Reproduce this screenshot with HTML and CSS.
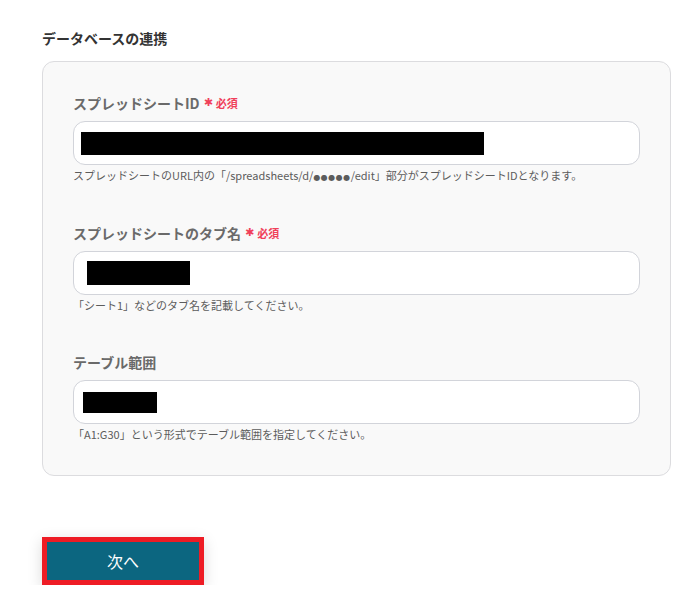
FILE: index.html
```html
<!DOCTYPE html>
<html lang="ja">
<head>
  <meta charset="UTF-8">
  <meta name="viewport" content="width=device-width, initial-scale=1.0">
  <title>データベースの連携</title>
  <link rel="stylesheet" href="styles.css">
</head>
<body>
  <div class="page">
    <h3 class="section-title">データベースの連携</h3>
    <div class="card">

      <div class="field">
        <div class="field-label">スプレッドシートID<span class="required"><span class="star">✱</span>必須</span></div>
        <div class="input-box">
          <div class="mask mask-id"></div>
        </div>
        <p class="help">スプレッドシートのURL内の「/spreadsheets/d/<span class="dots">●●●●●</span>/edit」部分がスプレッドシートIDとなります。</p>
      </div>

      <div class="field">
        <div class="field-label">スプレッドシートのタブ名<span class="required"><span class="star">✱</span>必須</span></div>
        <div class="input-box">
          <div class="mask mask-tab"></div>
        </div>
        <p class="help">「シート1」などのタブ名を記載してください。</p>
      </div>

      <div class="field field-last">
        <div class="field-label">テーブル範囲</div>
        <div class="input-box">
          <div class="mask mask-range"></div>
        </div>
        <p class="help">「A1:G30」という形式でテーブル範囲を指定してください。</p>
      </div>

    </div>

    <button class="next-btn" type="button">次へ</button>
  </div>
</body>
</html>
```

FILE: styles.css
```css
body {
  margin: 0;
  font-family: "Noto Sans CJK JP", "Noto Sans", sans-serif;
  background-color: #fff;
  color: #333;
}

.page {
  padding: 28px 28px 0 42px;
}

.section-title {
  margin: 0 0 13px;
  font-size: 14px;
  line-height: 20px;
  font-weight: bold;
  color: #333;
}

.card {
  width: 567px;
  padding: 31px 30px 33px 30px;
  border: 1px solid #dcdcdf;
  border-radius: 12px;
  background-color: #f9f9f9;
}

.field + .field {
  margin-top: 37px;
}

.field + .field-last {
  margin-top: 39px;
}

.field-label {
  display: flex;
  align-items: center;
  font-size: 14px;
  line-height: 20px;
  font-weight: bold;
  color: #6a6a6a;
}

.required {
  display: flex;
  align-items: center;
  margin-left: 4px;
  font-size: 11px;
  font-weight: bold;
  color: #f0405a;
}

.star {
  margin-right: 3px;
  font-family: "DejaVu Sans", sans-serif;
  font-size: 11px;
}

.input-box {
  display: flex;
  align-items: center;
  height: 42px;
  margin-top: 8px;
  border: 1px solid #d2d4da;
  border-radius: 12px;
  background-color: #fff;
}

.mask {
  background-color: #000;
}

.mask-id {
  width: 403px;
  height: 23px;
  margin-left: 7px;
}

.mask-tab {
  width: 103px;
  height: 24px;
  margin-left: 13px;
}

.mask-range {
  width: 74px;
  height: 21px;
  margin-left: 9px;
}

.help {
  margin: 2px 0 0;
  font-size: 11px;
  line-height: 16px;
  color: #5c5c5c;
}

.dots {
  font-family: "DejaVu Sans", sans-serif;
  font-size: 8px;
  letter-spacing: 0.5px;
}

.next-btn {
  display: block;
  width: 162px;
  height: 48px;
  margin-top: 61px;
  border: 5px solid #ee1c25;
  background-color: #0c6680;
  color: #fff;
  font-family: "Noto Sans CJK JP", sans-serif;
  font-size: 16px;
  cursor: pointer;
  box-shadow: 0 4px 14px rgba(0, 0, 0, 0.15);
}
```
